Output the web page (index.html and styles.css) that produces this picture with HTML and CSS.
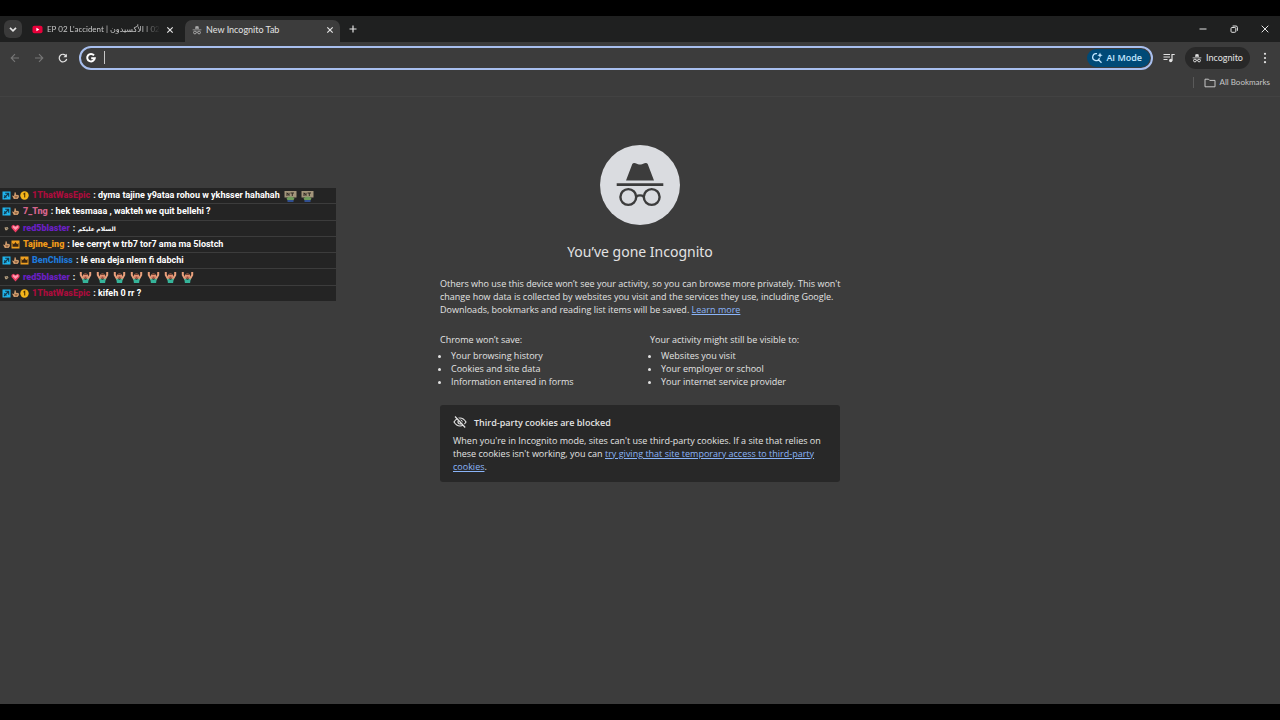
FILE: index.html
```
<!DOCTYPE html>
<html lang="en">
<head>
  <meta charset="UTF-8">
  <meta name="viewport" content="width=device-width, initial-scale=1.0">
  <title>New Incognito Tab</title>
  <link rel="stylesheet" href="styles.css">
</head>
<body>
  <!-- shared icons -->
  <svg class="sprite" aria-hidden="true">
    <symbol id="close" viewBox="0 0 10 10"><path d="M2.300 2.300l5.400 5.400M7.700 2.300L2.300 7.700" fill="none" stroke="currentColor" stroke-width="1.200"/></symbol>
    <symbol id="spy" viewBox="0 0 24 24">
      <path d="M7 9l1.6-5.4C8.900 2.500 9.800 2.300 10.600 2.700L12 3.200l1.400-.5c.8-.4 1.700-.2 2 .9L17 9zM1.500 10.500h21v2.300h-21z" fill="currentColor"/>
      <circle cx="7" cy="18" r="3.300" fill="none" stroke="currentColor" stroke-width="2.300"/>
      <circle cx="17" cy="18" r="3.300" fill="none" stroke="currentColor" stroke-width="2.300"/>
      <path d="M10 17.500q2-1.200 4 0" fill="none" stroke="currentColor" stroke-width="2"/>
    </symbol>
    <symbol id="arrow" viewBox="0 0 9 9"><path d="M.5 .5h8v8h-8z" fill="#20b4ec"/><path d="M2 7L6.500 2.500M3.200 2.300h3.500v3.500M2.200 4.500l2.200 2.200" fill="none" stroke="#12394d" stroke-width="1.100"/></symbol>
    <symbol id="hand" viewBox="0 0 9 9"><path d="M1 4.500L3 5l.7-3.700 1.100.2.200 2.300 2.500.3.500 1.900-1.500 2H2.800z" fill="#d19c6d"/><path d="M3.500 5.500h3M4 6.700h2" stroke="#71482d" stroke-width=".6"/></symbol>
    <symbol id="fist" viewBox="0 0 9 9"><path d="M2.500 3.500l3-.5 1 1.500L5 6.300H3.300z" fill="#b6a183"/><path d="M4 4l1.500.8" stroke="#4d4032" stroke-width=".7"/></symbol>
    <symbol id="coin" viewBox="0 0 9 9"><circle cx="4.500" cy="4.500" r="4.200" fill="#f3b51b"/><path d="M3.500 3.200l1.200-.9v4.300" fill="none" stroke="#4c3000" stroke-width="1.100"/></symbol>
    <symbol id="gem" viewBox="0 0 9 9"><path d="M4.500 8.500L.5 4V2l1.700-1.300L4.500 2 6.800.7 8.500 2v2z" fill="#ef3c65"/><path d="M1.500 3l1-1.300L4.500 3l2-1.300L7.700 3 4.500 6z" fill="#ff9db0"/></symbol>
    <symbol id="crown" viewBox="0 0 9 9"><path d="M.5 .5h8v8h-8z" fill="#f0a020"/><path d="M1.500 3l1.400 1.300 1.600-2.200 1.600 2.200L7.500 3v3.800h-6z" fill="#3b2610"/></symbol>
    <symbol id="cheer" viewBox="0 0 12 12">
      <path d="M1.300 1v3L4 8.700M10.700 1v3L8 8.700" fill="none" stroke="#e9a07c" stroke-width="2"/>
      <circle cx="6" cy="5" r="2.600" fill="#e39474"/><path d="M3.500 4q2.500-3 5 0z" fill="#76412f"/>
      <path d="M2.800 7.600L6 8.700l3.200-1.100L8.600 12H3.400z" fill="#35b49a"/><path d="M5 6.200h2" stroke="#7c2925"/>
    </symbol>
    <symbol id="sign" viewBox="0 0 12 12">
      <path d="M0 1h12v6.500H0z" fill="#a3957b"/><path d="M2.500 6V2.800l2 2.700V2.800M6 3h3.500M7.800 3v3" fill="none" stroke="#302a24" stroke-width="1"/>
      <path d="M2 8.500l2-1.800h4l2 1.800-1 1.700H3z" fill="#6e9a5b"/><path d="M3 10h6v2H3z" fill="#314f91"/>
    </symbol>
  </svg>

  <div class="browser">
    <header class="tab-strip">
      <button class="tab-search" aria-label="Search tabs"><svg viewBox="0 0 10 10"><path d="M2.500 4L5 6.500 7.500 4" fill="none" stroke="currentColor" stroke-width="1.400"/></svg></button>
      <div class="tab">
        <svg class="favicon" viewBox="0 0 12 12"><rect x=".5" y="1.800" width="11" height="8.400" rx="2.200" fill="#e8003a"/><path d="M4.800 4.200v3.600L8 6z" fill="#fff"/></svg>
        <span class="tab-title faded">EP 02 L'accident | الأكسيدون I 02</span>
        <button class="tab-close" aria-label="Close tab"><svg><use href="#close"/></svg></button>
      </div>
      <div class="tab active">
        <svg class="favicon dim"><use href="#spy"/></svg>
        <span class="tab-title">New Incognito Tab</span>
        <button class="tab-close" aria-label="Close tab"><svg><use href="#close"/></svg></button>
      </div>
      <button class="new-tab" aria-label="New tab"><svg viewBox="0 0 10 10"><path d="M5 1.500v7M1.500 5h7" stroke="currentColor" stroke-width="1.200"/></svg></button>
      <div class="window-buttons">
        <button aria-label="Minimize"><svg viewBox="0 0 10 10"><path d="M1.500 5h7" stroke="currentColor"/></svg></button>
        <button aria-label="Restore"><svg viewBox="0 0 10 10"><rect x="2" y="3.500" width="4.800" height="4.800" rx="1" fill="none" stroke="currentColor"/><path d="M3.600 2h3.400q1.400 0 1.400 1.400v3.400" fill="none" stroke="currentColor"/></svg></button>
        <button aria-label="Close"><svg viewBox="0 0 10 10"><path d="M1.700 1.700l6.600 6.600M8.300 1.700L1.700 8.300" stroke="currentColor"/></svg></button>
      </div>
    </header>

    <nav class="toolbar">
      <button class="nav-button" aria-label="Back" disabled><svg viewBox="0 0 12 12"><path d="M10 6H2.500M6 2.200L2.200 6 6 9.800" fill="none" stroke="currentColor" stroke-width="1.100"/></svg></button>
      <button class="nav-button" aria-label="Forward" disabled><svg viewBox="0 0 12 12"><path d="M2 6h7.500M6 2.200L9.800 6 6 9.800" fill="none" stroke="currentColor" stroke-width="1.100"/></svg></button>
      <button class="nav-button" aria-label="Reload"><svg viewBox="0 0 12 12"><path d="M9.200 4A3.800 3.800 0 1 0 9.700 7" fill="none" stroke="currentColor" stroke-width="1.200"/><path d="M9.900 1.700v3.500H6.400z" fill="currentColor"/></svg></button>
      <div class="omnibox">
        <svg class="google" viewBox="0 0 12 12"><path d="M9 3.300A3.800 3.800 0 1 0 9.800 6.200H6.200" fill="none" stroke="currentColor" stroke-width="2"/></svg>
        <span class="caret"></span>
        <input type="text" aria-label="Search Google or type a URL">
        <button class="ai-mode">
          <svg viewBox="0 0 12 12"><path d="M6 1.700A3.500 3.500 0 1 0 8.500 6.300M7.500 7.700L10.500 10.700" fill="none" stroke="currentColor" stroke-width="1.300"/><path d="M9 .5l.8 1.900 1.900.8-1.900.8L9 5.900 8.200 4l-1.900-.8 1.900-.8z" fill="currentColor"/></svg>
          AI Mode
        </button>
      </div>
      <button class="media" aria-label="Media controls"><svg viewBox="0 0 12 12"><path d="M.5 2.500h6.500M.5 5h6.500M.5 7.500h4M9 8.500V2.500h2.700" fill="none" stroke="currentColor" stroke-width="1.200"/><circle cx="7.700" cy="8.500" r="1.700" fill="currentColor"/></svg></button>
      <button class="profile"><svg><use href="#spy"/></svg>Incognito</button>
      <button class="menu" aria-label="Menu"><svg viewBox="0 0 12 12"><circle cx="6" cy="1.800" r="1.100"/><circle cx="6" cy="6" r="1.100"/><circle cx="6" cy="10.200" r="1.100"/></svg></button>
    </nav>

    <div class="bookmarks">
      <button><svg viewBox="0 0 12 12"><path d="M1 2.200h3.500l1.200 1.200H11v6.400H1z" fill="none" stroke="currentColor" stroke-linejoin="round"/></svg>All Bookmarks</button>
    </div>

    <main>
      <div class="content">
        <svg class="hero" viewBox="0 0 80 80">
          <circle cx="40" cy="40" r="40" fill="#dadce0"/>
          <g fill="#3c3c3c"><path d="M26 35.500L32.300 19q1-1.700 3.200-.8l2.500 1q2 .7 4 0l2.500-1q2.200-.9 3.200.8L54 35.500z"/><path d="M16.700 38.200h46.600v2.800H16.700z"/></g>
          <g fill="none" stroke="#3c3c3c" stroke-width="2.400"><circle cx="28.300" cy="52" r="7.900"/><circle cx="51.700" cy="52" r="7.900"/><path d="M36 51.600q4-2.400 8 0"/></g>
        </svg>
        <h1>You’ve gone Incognito</h1>
        <p class="intro">Others who use this device won’t see your activity, so you can browse more privately. This won't change how data is collected by websites you visit and the services they use, including Google. Downloads, bookmarks and reading list items will be saved. <a href="#">Learn more</a></p>
        <div class="columns">
          <section>
            <h2>Chrome won’t save:</h2>
            <ul>
              <li>Your browsing history</li>
              <li>Cookies and site data</li>
              <li>Information entered in forms</li>
            </ul>
          </section>
          <section>
            <h2>Your activity might still be visible to:</h2>
            <ul>
              <li>Websites you visit</li>
              <li>Your employer or school</li>
              <li>Your internet service provider</li>
            </ul>
          </section>
        </div>
        <section class="cookies">
          <h2><svg viewBox="0 0 14 14"><path d="M1 7q2.500-4 6-4t6 4q-2.500 4-6 4T1 7z" fill="none" stroke="currentColor" stroke-width="1.200"/><circle cx="7" cy="7" r="2" fill="none" stroke="currentColor" stroke-width="1.200"/><path d="M3 1.500L13 12" stroke="#282828" stroke-width="1.500"/><path d="M2 1.500L12.200 12.500" stroke="currentColor" stroke-width="1.200"/></svg>Third-party cookies are blocked</h2>
          <p>When you're in Incognito mode, sites can't use third-party cookies. If a site that relies on these cookies isn't working, you can <a href="#">try giving that site temporary access to third-party cookies</a>.</p>
        </section>
      </div>
    </main>
  </div>

  <!-- stream chat, floats over the page -->
  <ul class="chat">
    <li><svg><use href="#arrow"/></svg><svg><use href="#hand"/></svg><svg><use href="#coin"/></svg><b class="crimson">1ThatWasEpic</b><span>: dyma tajine y9ataa rohou w ykhsser hahahah</span><svg class="emote"><use href="#sign"/></svg><svg class="emote"><use href="#sign"/></svg></li>
    <li><svg><use href="#arrow"/></svg><svg><use href="#hand"/></svg><b class="pink">7_Tng</b><span>: hek tesmaaa , wakteh we quit bellehi ?</span></li>
    <li><svg><use href="#fist"/></svg><svg><use href="#gem"/></svg><b class="purple">red5blaster</b><span>: <bdi class="arabic">السلام عليكم</bdi></span></li>
    <li><svg><use href="#hand"/></svg><svg><use href="#crown"/></svg><b class="orange">Tajine_ing</b><span>: lee cerryt w trb7 tor7 ama ma 5lostch</span></li>
    <li><svg><use href="#arrow"/></svg><svg><use href="#hand"/></svg><svg><use href="#crown"/></svg><b class="blue">BenChliss</b><span>: lé ena deja nlem fi dabchi</span></li>
    <li><svg><use href="#fist"/></svg><svg><use href="#gem"/></svg><b class="purple">red5blaster</b><span>:</span><svg class="emote"><use href="#cheer"/></svg><svg class="emote"><use href="#cheer"/></svg><svg class="emote"><use href="#cheer"/></svg><svg class="emote"><use href="#cheer"/></svg><svg class="emote"><use href="#cheer"/></svg><svg class="emote"><use href="#cheer"/></svg><svg class="emote"><use href="#cheer"/></svg></li>
    <li><svg><use href="#arrow"/></svg><svg><use href="#hand"/></svg><svg><use href="#coin"/></svg><b class="crimson">1ThatWasEpic</b><span>: kifeh 0 rr ?</span></li>
  </ul>
</body>
</html>
```
FILE: styles.css
```
* {
  box-sizing: border-box;
}
body {
  margin: 0;
  padding: 16px 0;
  min-height: 100vh;
  display: flex;
  background: #000;
  color: #e3e3e3;
  font-family: "Open Sans", "DejaVu Sans", sans-serif;
  font-size: 9px;
  line-height: 13px;
}
button {
  display: flex;
  align-items: center;
  justify-content: center;
  padding: 0;
  border: none;
  background: none;
  color: inherit;
  font: inherit;
  cursor: pointer;
}
svg {
  flex: none;
  width: 12px;
  height: 12px;
}
a {
  color: #8ab4f8;
}
.sprite {
  position: absolute;
  width: 0;
  height: 0;
}
.browser {
  flex: 1;
  display: flex;
  flex-direction: column;
  background: #3c3c3c;
}

/* tabs */
.tab-strip {
  display: flex;
  align-items: flex-end;
  height: 26px;
  padding-left: 4px;
  background: #1f2020;
}
.tab-search {
  width: 18px;
  height: 18px;
  margin-bottom: 4px;
  border-radius: 6px;
  background: #3a3a3a;
}
.tab {
  display: flex;
  align-items: center;
  gap: 4px;
  width: 155px;
  height: 22px;
  margin-left: 3px;
  padding: 0 4px 3px 7px;
  border-radius: 7px 7px 0 0;
  font-family: Lato, "DejaVu Sans", sans-serif;
}
.tab.active {
  margin-left: 5px;
  background: #3c3c3c;
}
.favicon {
  width: 11px;
  height: 11px;
}
.favicon.dim {
  width: 10px;
  height: 10px;
  color: #aaa;
}
.tab-title {
  flex: 1;
  overflow: hidden;
  white-space: nowrap;
}
.faded {
  color: #c7c7c7;
  font-size: 8px;
  mask-image: linear-gradient(to right, #000 84%, transparent);
}
.tab-close {
  width: 12px;
  height: 12px;
}
.tab-close svg,
.new-tab svg,
.window-buttons svg {
  width: 10px;
  height: 10px;
}
.new-tab {
  width: 18px;
  height: 18px;
  margin: 0 0 4px 4px;
}
.window-buttons {
  display: flex;
  margin-left: auto;
  height: 26px;
}
.window-buttons button {
  width: 31px;
}

/* toolbar */
.toolbar {
  display: flex;
  align-items: center;
  height: 31px;
  padding: 0 8px 0 3px;
}
.nav-button {
  width: 24px;
  height: 24px;
}
.nav-button:disabled {
  color: #777;
}
.omnibox {
  flex: 1;
  display: flex;
  align-items: center;
  height: 24px;
  margin-left: 4px;
  padding: 0 1px 0 4px;
  border: 2px solid #a8bfee;
  border-radius: 12px;
}
.google {
  color: #fff;
}
.caret {
  width: 1px;
  height: 13px;
  margin-left: 7px;
  background: #c7c7c7;
}
.omnibox input {
  flex: 1;
  min-width: 0;
  border: none;
  outline: none;
  background: none;
  color: inherit;
  font: inherit;
}
.ai-mode {
  gap: 3px;
  height: 18px;
  padding: 0 8px 0 4px;
  border-radius: 9px;
  background: #004a77;
  color: #c2e7ff;
  font-weight: 600;
}
.media {
  width: 32px;
  height: 22px;
}
.profile {
  gap: 4px;
  width: 65px;
  height: 22px;
  border-radius: 11px;
  background: #282828;
  font-family: Lato, sans-serif;
}
.profile svg {
  width: 10px;
  height: 10px;
}
.menu {
  width: 14px;
  height: 22px;
  margin-left: 8px;
}
.menu svg {
  fill: currentColor;
}
.bookmarks {
  display: flex;
  align-items: center;
  justify-content: flex-end;
  height: 24px;
  padding: 0 10px 4px 0;
  border-bottom: 1px solid #424242;
}
.bookmarks button {
  gap: 4px;
  padding-left: 10px;
  border-left: 1px solid #5a5a5a;
  height: 11px;
  font-family: Lato, sans-serif;
  font-size: 8px;
  color: #c7c7c7;
}

/* new tab page */
main {
  flex: 1;
  padding: 48px 20px;
}
.content {
  max-width: 400px;
  margin: 0 auto;
}
.hero {
  display: block;
  width: 80px;
  height: 80px;
  margin: 0 auto;
}
h1 {
  margin: 17px 0 15px;
  font-family: "Noto Sans", sans-serif;
  font-size: 14px;
  font-weight: 400;
  line-height: 20px;
  text-align: center;
}
h2 {
  margin: 0;
  font-size: 9px;
  font-weight: 400;
}
p {
  margin: 0;
}
.intro {
  margin-right: -10px;
}
.columns {
  display: grid;
  grid-template-columns: 1fr 1fr;
  gap: 20px;
  margin-top: 17px;
}
.columns ul {
  margin: 3px 0 0;
  padding-left: 11px;
}
.cookies {
  margin-top: 17px;
  padding: 10px 13px 9px;
  border-radius: 3px;
  background: #282828;
}
.cookies h2 {
  display: flex;
  align-items: center;
  gap: 7px;
  margin-bottom: 5px;
  font-weight: 600;
}
.cookies svg {
  width: 14px;
  height: 14px;
}

/* chat */
.chat {
  position: absolute;
  top: 188px;
  left: 0;
  display: flex;
  flex-direction: column;
  width: 336px;
  height: 114px;
  margin: 0;
  padding: 0;
  list-style: none;
  background: #242424;
  color: #fff;
  font-family: Roboto, "DejaVu Sans", sans-serif;
  font-weight: 700;
}
.chat li {
  flex: 1;
  display: flex;
  align-items: center;
  padding-left: 2px;
  border-bottom: 1px solid #3c3c3c;
  white-space: nowrap;
}
.chat svg {
  width: 9px;
  height: 9px;
}
.chat b {
  margin: 0 3px;
}
.chat .emote {
  width: 13px;
  height: 12px;
  margin-left: 4px;
}
.arabic {
  font-size: 6px;
}
.crimson { color: #a80d3c; }
.pink { color: #d4648c; }
.purple { color: #6a1fc4; }
.orange { color: #f09a1a; }
.blue { color: #1e78d8; }
```
